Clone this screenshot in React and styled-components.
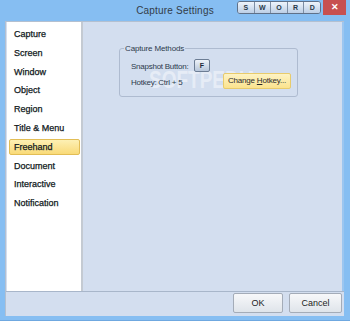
import React from 'react';
import styled, { createGlobalStyle } from 'styled-components';

const GlobalStyle = createGlobalStyle`
    html, body {
        margin: 0;
        padding: 0;
        background: #86bef2;
    }
    body {
        font-family: "Liberation Sans", Arial, sans-serif;
    }
`;

const Window = styled.div`
    width: 350px;
    height: 321px;
    display: flex;
    flex-direction: column;
    background: #86bef2;
    box-sizing: border-box;
    border-bottom: 1px solid #6fa8e0;
`;

const TitleBar = styled.div`
    height: 21px;
    display: grid;
    grid-template-columns: 1fr auto 1fr;
    align-items: start;
`;

const Title = styled.div`
    grid-column: 2;
    font-size: 10px;
    line-height: 22px;
    color: #333c48;
    letter-spacing: 0.2px;
`;

const TitleControls = styled.div`
    grid-column: 3;
    display: flex;
    justify-content: flex-end;
    align-items: flex-start;
    gap: 2px;
    padding-right: 4px;
`;

const KeyGroup = styled.div`
    display: flex;
    margin-top: 1px;
    border: 1px solid #5f7189;
    border-radius: 3px;
    overflow: hidden;
    background: #c9d9ec;
`;

const Key = styled.div`
    width: 15.6px;
    height: 11px;
    font-size: 7px;
    font-weight: bold;
    line-height: 11px;
    text-align: center;
    color: #283848;
    background: linear-gradient(#eef4fb, #bccfe6);
    border-left: ${p => (p.first ? 'none' : '1px solid #7d8ea4')};
`;

const CloseButton = styled.div`
    width: 23px;
    height: 15px;
    background: #c75050;
    color: #fff;
    font-size: 9px;
    font-weight: bold;
    line-height: 15px;
    text-align: center;
`;

const Client = styled.div`
    flex: 1;
    margin: 0 6px 4px 5px;
    display: flex;
    flex-direction: column;
    background: #d3deef;
    border-left: 1px solid #b4c0d0;
    border-top: 1px solid #b4c0d0;
`;

const Main = styled.div`
    flex: 1;
    display: flex;
    border-bottom: 1px solid #a8b6ca;
`;

const Sidebar = styled.div`
    width: 74px;
    margin-left: 1px;
    background: #fff;
    border-right: 2px solid #c4cad2;
    padding-top: 4px;
    display: flex;
    flex-direction: column;
    gap: 2.8px;
`;

const NavItem = styled.div`
    height: 16px;
    margin: 0 1px 0 2px;
    padding-left: 4px;
    box-sizing: border-box;
    font-size: 9px;
    line-height: 15px;
    color: #101820;
    -webkit-text-stroke: 0.25px #101820;
    border-radius: 2px;
    border: 1px solid ${p => (p.active ? '#e2bd55' : 'transparent')};
    background: ${p => (p.active ? 'linear-gradient(#fdf0b4, #f9da78)' : 'transparent')};
`;

const Content = styled.div`
    flex: 1;
    position: relative;
    padding: 22px 0 0 36px;
    border-right: 2px solid #9cc6f0;
`;

const GroupBox = styled.fieldset`
    position: relative;
    z-index: 1;
    width: 179px;
    height: 53px;
    margin: 0;
    padding: 7px 0 0 11px;
    box-sizing: border-box;
    border: 1px solid #aebbd0;
    border-radius: 3px;
`;

const Legend = styled.legend`
    padding: 0 1px;
    margin-left: -7px;
    font-size: 8px;
    letter-spacing: -0.15px;
    color: #2c3a4c;
`;

const Row = styled.div`
    display: flex;
    align-items: flex-start;
    height: 16px;
`;

const Label = styled.span`
    flex-shrink: 0;
    white-space: nowrap;
    font-size: 8px;
    letter-spacing: -0.25px;
    line-height: 13px;
    color: #2c3a4c;
    width: ${p => p.w}px;
`;

const KeyButton = styled.div`
    width: 16px;
    height: 13px;
    margin-top: -1px;
    box-sizing: border-box;
    border: 1px solid #6c7d94;
    border-radius: 2px;
    background: linear-gradient(#eef3f9, #b7c6da);
    font-size: 7px;
    font-weight: bold;
    line-height: 11px;
    text-align: center;
    color: #1c2838;
`;

const HotkeyButton = styled.div`
    flex-shrink: 0;
    white-space: nowrap;
    width: 68px;
    height: 16px;
    margin-top: -3px;
    box-sizing: border-box;
    border: 1px solid #e8cb6c;
    border-radius: 2px;
    background: linear-gradient(#fdf3c4, #fbe38e);
    font-size: 8px;
    letter-spacing: -0.2px;
    line-height: 14px;
    text-align: center;
    color: #2a2a2a;
`;

const Watermark = styled.div`
    position: absolute;
    z-index: 0;
    left: 66px;
    top: 48px;
    font-size: 19px;
    line-height: 19px;
    font-weight: bold;
    color: rgba(255, 255, 255, 0.45);
    transform: scaleY(1.3);
    pointer-events: none;
`;

const Footer = styled.div`
    height: 24px;
    display: flex;
    justify-content: flex-end;
    align-items: flex-start;
    gap: 6px;
    padding: 1px 2px 0 0;
    box-sizing: border-box;
`;

const DialogButton = styled.div`
    width: ${p => p.w}px;
    height: 20px;
    box-sizing: border-box;
    border: 1px solid #a4acb8;
    border-radius: 2px;
    background: linear-gradient(#f7f8fa, #dfe4ea);
    font-size: 9px;
    line-height: 18px;
    text-align: center;
    color: #222;
`;

const NAV = [
    'Capture', 'Screen', 'Window', 'Object', 'Region',
    'Title & Menu', 'Freehand', 'Document', 'Interactive', 'Notification',
];

export default function App() {
    return (
        <Window>
            <GlobalStyle />
            <TitleBar>
                <Title>Capture Settings</Title>
                <TitleControls>
                    <KeyGroup>
                        {['S', 'W', 'O', 'R', 'D'].map((k, i) => (
                            <Key key={k} first={i === 0}>{k}</Key>
                        ))}
                    </KeyGroup>
                    <CloseButton>✕</CloseButton>
                </TitleControls>
            </TitleBar>
            <Client>
                <Main>
                    <Sidebar>
                        {NAV.map(n => (
                            <NavItem key={n} active={n === 'Freehand'}>{n}</NavItem>
                        ))}
                    </Sidebar>
                    <Content>
                        <GroupBox>
                            <Legend>Capture Methods</Legend>
                            <Row>
                                <Label w={63}>Snapshot Button:</Label>
                                <KeyButton>F</KeyButton>
                            </Row>
                            <Row>
                                <Label w={92}>Hotkey: Ctrl + 5</Label>
                                <HotkeyButton>Change <u>H</u>otkey...</HotkeyButton>
                            </Row>
                        </GroupBox>
                        <Watermark>SOFTPEDIA</Watermark>
                    </Content>
                </Main>
                <Footer>
                    <DialogButton w={50}>OK</DialogButton>
                    <DialogButton w={53}>Cancel</DialogButton>
                </Footer>
            </Client>
        </Window>
    );
}
